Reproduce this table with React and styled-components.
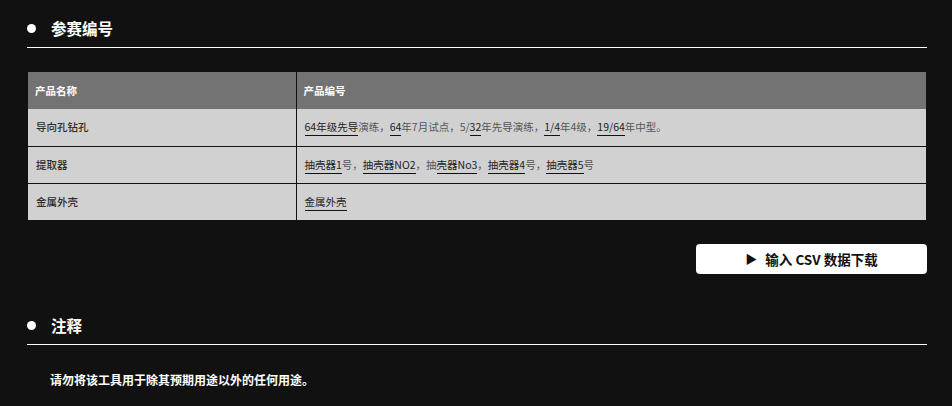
import React from "react";
import styled, { createGlobalStyle } from "styled-components";

const Global = createGlobalStyle`
  html, body { margin: 0; padding: 0; background: #111111; }
  body { font-family: "Noto Sans CJK SC", "Noto Sans", sans-serif; color: #fff; }
`;

const Page = styled.div`
  padding: 0 25px 0 27px;
  width: 900px;
`;

const Section = styled.section`
  margin-top: ${(p) => p.$top}px;
`;

const Heading = styled.h2`
  position: relative;
  margin: 0;
  padding: 0 0 9px 24px;
  font-size: 15.5px;
  line-height: 20px;
  font-weight: 700;
  color: #fff;
  border-bottom: 1px solid #fff;
  &::before {
    content: "";
    position: absolute;
    left: 0;
    top: 6px;
    width: 9px;
    height: 9px;
    border-radius: 50%;
    background: #fff;
  }
`;

const Table = styled.table`
  margin: 24px 0 0 1px;
  width: 898px;
  border-collapse: collapse;
  font-size: 10.5px;
  line-height: 16px;
`;

const Th = styled.th`
  background: #737373;
  color: #fff;
  font-weight: 700;
  text-align: left;
  height: 37px;
  padding: 0 7px;
  box-sizing: border-box;
  width: ${(p) => p.$w || "auto"};
  & + & { border-left: 1px solid #111; }
`;

const Row = styled.tr`
  & + & td { border-top: 1px solid #111; }
`;

const Td = styled.td`
  background: #d1d1d1;
  color: #2b2b2b;
  font-weight: ${(p) => (p.$label ? 500 : 400)};
  height: 37px;
  padding: 0 7px 0 8px;
  box-sizing: border-box;
  & + & { border-left: 1px solid #111; }
`;

const Plain = styled.span`
  color: #555;
`;

const Link = styled.a`
  color: #222;
  text-decoration: none;
  border-bottom: 1px solid #111;
  padding-bottom: 1px;
`;

const Actions = styled.div`
  display: flex;
  justify-content: flex-end;
  margin-top: 24px;
`;

const Button = styled.button`
  width: 231px;
  height: 30px;
  border: none;
  border-radius: 4px;
  background: #fff;
  color: #111;
  font-family: inherit;
  font-size: 13.5px;
  font-weight: 700;
  display: flex;
  align-items: center;
  justify-content: center;
  gap: 8px;
  padding: 0;
`;

const Arrow = styled.span`
  font-size: 12px;
  line-height: 1;
`;

const Note = styled.p`
  margin: 25px 0 0 23px;
  font-size: 12px;
  line-height: 20px;
  font-weight: 600;
  color: #fff;
`;

const rows = [
  {
    name: "导向孔钻孔",
    parts: [
      ["l", "64年级先导"], ["p", "演练，"], ["l", "64"], ["p", "年7月试点，5/"], ["l", "32"],
      ["p", "年先导演练，"], ["l", "1/4"], ["p", "年4级，"], ["l", "19/64"], ["p", "年中型。"],
    ],
  },
  {
    name: "提取器",
    parts: [
      ["l", "抽壳器1"], ["p", "号，"], ["l", "抽壳器NO2"], ["p", "，抽"], ["l", "壳器No3"],
      ["p", "，"], ["l", "抽壳器4"], ["p", "号，"], ["l", "抽壳器5"], ["p", "号"],
    ],
  },
  { name: "金属外壳", parts: [["l", "金属外壳"]] },
];

export default function App() {
  return (
    <>
      <Global />
      <Page>
        <Section $top={18}>
          <Heading>参赛编号</Heading>
          <Table>
            <thead>
              <tr>
                <Th $w="268px">产品名称</Th>
                <Th>产品编号</Th>
              </tr>
            </thead>
            <tbody>
              {rows.map((r) => (
                <Row key={r.name}>
                  <Td $label>{r.name}</Td>
                  <Td>
                    {r.parts.map(([k, t], i) =>
                      k === "l" ? <Link key={i}>{t}</Link> : <Plain key={i}>{t}</Plain>
                    )}
                  </Td>
                </Row>
              ))}
            </tbody>
          </Table>
          <Actions>
            <Button>
              <Arrow>▶</Arrow>输入 CSV 数据下载
            </Button>
          </Actions>
        </Section>
        <Section $top={41}>
          <Heading>注释</Heading>
          <Note>请勿将该工具用于除其预期用途以外的任何用途。</Note>
        </Section>
      </Page>
    </>
  );
}
